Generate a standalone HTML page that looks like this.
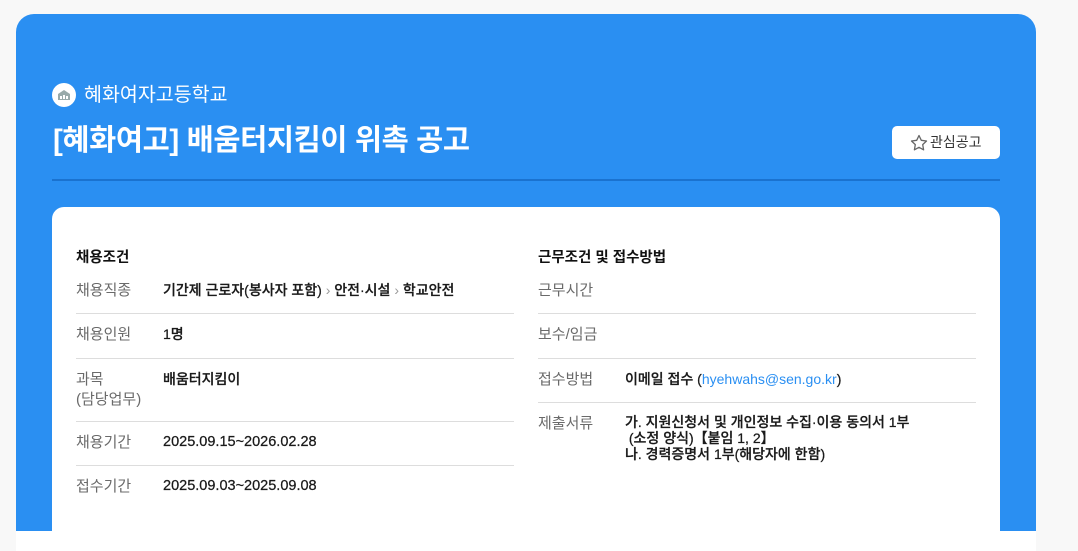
<!DOCTYPE html>
<html><head><meta charset="utf-8"><style>
*{margin:0;padding:0;box-sizing:border-box}
html,body{width:1078px;height:551px;overflow:hidden}
body{background:#f8f8f8;font-family:"Liberation Sans","Noto Sans CJK KR",sans-serif;position:relative}
.a{position:absolute}
.blue{left:16px;top:14px;width:1020px;height:517px;background:#2a8ff2;border-radius:18px 18px 0 0}
.white{left:16px;top:531px;width:1020px;height:20px;background:#fff}
.card{left:52px;top:207px;width:948px;height:344px;background:#fff;border-radius:12px 12px 0 0}
.lab{color:#6a6a6a;font-size:15px;line-height:20px}
.val{color:#1a1a1a;font-size:14px;font-weight:500;line-height:16px;-webkit-text-stroke:0.25px #1a1a1a}
.sep{height:1px;background:#ddd}
.h{font-size:14.5px;font-weight:bold;color:#111}
</style></head><body>
<div class="a blue"></div>
<div class="a white"></div>
<div class="a" style="left:52px;top:83px;width:24px;height:24px;border-radius:50%;background:#fff"></div>
<svg class="a" style="left:56px;top:87px" width="16" height="16" viewBox="0 0 16 16"><path d="M8 3l6 4v6H2V7z" fill="#9aa"/><rect x="4" y="9" width="2" height="3" fill="#fff"/><rect x="10" y="9" width="2" height="3" fill="#fff"/><rect x="7" y="8" width="2" height="4" fill="#fff"/></svg>
<div class="a" style="left:84px;top:82px;color:#fff;font-size:19.5px;line-height:26px">혜화여자고등학교</div>
<div class="a" style="left:53px;top:121px;color:#fff;font-size:29.5px;font-weight:bold;line-height:40px;letter-spacing:-0.4px">[혜화여고] 배움터지킴이 위촉 공고</div>
<div class="a" style="left:892px;top:126px;width:108px;height:33px;background:#fff;border-radius:5px;font-size:14px;color:#333;line-height:33px;padding-left:38px">관심공고</div>
<svg class="a" style="left:909px;top:133px" width="20" height="20" viewBox="0 0 20 20"><path d="M10 2.5l2.3 4.8 5.2.7-3.8 3.6.9 5.2L10 14.3l-4.6 2.5.9-5.2L2.5 8l5.2-.7z" fill="none" stroke="#666" stroke-width="1.3" stroke-linejoin="round"/></svg>
<div class="a" style="left:52px;top:179px;width:948px;height:2px;background:#1a72cf"></div>
<div class="a card"></div>

<div class="a h" style="left:76px;top:246px">채용조건</div>
<div class="a lab" style="left:76px;top:281px">채용직종</div>
<div class="a val" style="left:163px;top:282px">기간제 근로자(봉사자 포함) <span style="color:#999;font-weight:normal;-webkit-text-stroke:0">›</span> 안전·시설 <span style="color:#999;font-weight:normal;-webkit-text-stroke:0">›</span> 학교안전</div>
<div class="a sep" style="left:76px;top:313px;width:438px"></div>
<div class="a lab" style="left:76px;top:325px">채용인원</div>
<div class="a val" style="left:163px;top:326px">1명</div>
<div class="a sep" style="left:76px;top:358px;width:438px"></div>
<div class="a lab" style="left:76px;top:370px">과목<br>(담당업무)</div>
<div class="a val" style="left:163px;top:371px">배움터지킴이</div>
<div class="a sep" style="left:76px;top:421px;width:438px"></div>
<div class="a lab" style="left:76px;top:433px">채용기간</div>
<div class="a val" style="left:163px;top:434px;font-size:14.5px">2025.09.15~2026.02.28</div>
<div class="a sep" style="left:76px;top:465px;width:438px"></div>
<div class="a lab" style="left:76px;top:477px">접수기간</div>
<div class="a val" style="left:163px;top:478px;font-size:14.5px">2025.09.03~2025.09.08</div>

<div class="a h" style="left:538px;top:246px">근무조건 및 접수방법</div>
<div class="a lab" style="left:538px;top:281px">근무시간</div>
<div class="a sep" style="left:538px;top:313px;width:438px"></div>
<div class="a lab" style="left:538px;top:325px">보수/임금</div>
<div class="a sep" style="left:538px;top:358px;width:438px"></div>
<div class="a lab" style="left:538px;top:370px">접수방법</div>
<div class="a val" style="left:625px;top:371px">이메일 접수 (<span style="color:#2a8ff2;-webkit-text-stroke:0;font-weight:normal">hyehwahs@sen.go.kr</span>)</div>
<div class="a sep" style="left:538px;top:402px;width:438px"></div>
<div class="a lab" style="left:538px;top:414px">제출서류</div>
<div class="a val" style="left:625px;top:414px">가. 지원신청서 및 개인정보 수집·이용 동의서 1부<br>&nbsp;(소정 양식)【붙임 1, 2】<br>나. 경력증명서 1부(해당자에 한함)</div>
</body></html>
